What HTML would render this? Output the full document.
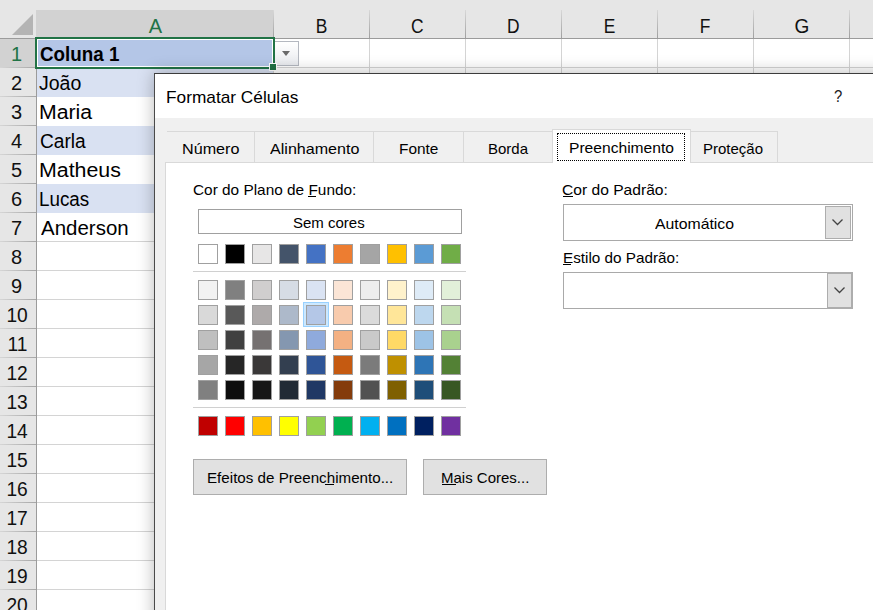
<!DOCTYPE html>
<html><head><meta charset="utf-8">
<style>
*{margin:0;padding:0;box-sizing:border-box}
html,body{width:873px;height:610px;overflow:hidden;background:#fff}
body{position:relative;font-family:"Liberation Sans",sans-serif;color:#000}
.abs{position:absolute}
.t{position:absolute;white-space:nowrap;line-height:30px;transform-origin:0 0}
.ul{position:absolute;height:1px;background:#000}
#topstrip{position:absolute;left:0;top:0;width:873px;height:10px;background:#e6e6e6}
#corner{position:absolute;left:0;top:10px;width:36px;height:28px;background:#e6e6e6}
#tri{position:absolute;left:12px;top:14px;width:0;height:0;border-left:21px solid transparent;border-bottom:21px solid #b4b4b4}
.ch{position:absolute;top:10px;height:28px;background:#e6e6e6;text-align:center;font-size:20px;line-height:32px;color:#111}
.ch.sel{background:#d2d2d2;color:#217346}
#chbg{position:absolute;left:36px;top:10px;width:837px;height:1px;background:#e6e6e6}
.chsep{position:absolute;top:10px;width:1px;height:28px;background:linear-gradient(#d8d8d8,#a0a0a0)}
#hbot{position:absolute;left:0;top:38px;width:873px;height:1px;background:#9b9b9b}
#hsel{position:absolute;left:36px;top:37px;width:238px;height:2px;background:#217346}
.rh{position:absolute;left:0;width:36px;height:28px;background:#e6e6e6;text-align:center;font-size:20px;line-height:30px;color:#111}
.rh.sel{background:#d2d2d2}
.rn{position:absolute;left:0;height:28px;text-align:center;font-size:20px;line-height:30px;color:#111}
.rn.sel{color:#217346}
.rsep{position:absolute;left:0;width:36px;height:1px;background:linear-gradient(to right,#d6d6d6,#a6a6a6)}
#rright{position:absolute;left:36px;top:38px;width:1px;height:572px;background:#9b9b9b}
.gh{position:absolute;width:873px;height:1px;background:#d4d4d4}
.gv{position:absolute;top:39px;width:1px;height:571px;background:#d4d4d4}
.cellbg{position:absolute;left:37px;width:237px;height:29px}
#selfill{position:absolute;left:37px;top:39px;width:236px;height:28px;background:#B4C6E7}
#selbox{position:absolute;left:35px;top:37px;width:240px;height:32px;border:2px solid #217346}
#selin{position:absolute;left:37px;top:39px;width:236px;height:28px;border:1px solid #fff}
#handle{position:absolute;left:269px;top:63px;width:8px;height:8px;background:#217346;border:1px solid #fff}
#ddbtn{position:absolute;left:274px;top:41px;width:25px;height:25px;border:1px solid #b4b8c0;background:linear-gradient(#ffffff,#e9ebef)}
#ddbtn:after{content:"";position:absolute;left:7px;top:9px;border-left:4.6px solid transparent;border-right:4.6px solid transparent;border-top:5px solid #6a6a6a}
#dlg{position:absolute;left:154px;top:73px;width:760px;height:600px;background:#f0f0f0;border:1px solid #4a4a4a;border-top-color:#3c3c3c;box-shadow:0 0 16px rgba(0,0,0,0.28)}
#title{position:absolute;left:155px;top:74px;width:718px;height:44px;background:#fff}
.tab{position:absolute;top:131px;height:31px;border-top:1px solid #d9d9d9;border-right:1px solid #d9d9d9;background:#f0f0f0}
.tab.sel{top:129px;height:34px;background:#fff;border-left:1px solid #d9d9d9}
#panel{position:absolute;left:165px;top:162px;width:720px;height:460px;background:#fff;border:1px solid #d9d9d9}
#focus{position:absolute;left:557px;top:133px;width:128px;height:28px;border:1px dotted #000}
.sw{position:absolute;width:20px;height:20px;border:1px solid #a0a0a0}
.hl{position:absolute;border:1px solid #99d1ff;background:#cce8ff;width:26px;height:25px}
.sep{position:absolute;left:193px;width:273px;height:1px;background:#d0d0d0}
#semcores{position:absolute;left:198px;top:209px;width:264px;height:25px;border:1px solid #a0a0a0}
.combo{position:absolute;left:563px;width:290px;height:37px;border:1px solid #a9a9a9;background:#fff}
.cbtn{position:absolute;background:#e1e1e1;border:1px solid #adadad}
.btn{position:absolute;top:459px;height:36px;background:#e1e1e1;border:1px solid #adadad}
</style></head><body>
<div id="topstrip"></div>
<div id="corner"></div><div id="tri"></div>
<div class="ch sel" style="left:36px;width:237px"><span style="display:inline-block;transform:scaleX(1);margin-left:2px">A</span></div><div class="ch" style="left:274px;width:95px"><span style="display:inline-block;transform:scaleX(0.87);">B</span></div><div class="ch" style="left:370px;width:95px"><span style="display:inline-block;transform:scaleX(0.87);">C</span></div><div class="ch" style="left:466px;width:95px"><span style="display:inline-block;transform:scaleX(0.87);">D</span></div><div class="ch" style="left:562px;width:95px"><span style="display:inline-block;transform:scaleX(0.87);">E</span></div><div class="ch" style="left:658px;width:95px"><span style="display:inline-block;transform:scaleX(0.87);">F</span></div><div class="ch" style="left:754px;width:95px"><span style="display:inline-block;transform:scaleX(0.95);">G</span></div><div class="ch" style="left:850px;width:95px"><span style="display:inline-block;transform:scaleX(0.87);"></span></div><div class="chsep" style="left:273px"></div><div class="chsep" style="left:369px"></div><div class="chsep" style="left:465px"></div><div class="chsep" style="left:561px"></div><div class="chsep" style="left:657px"></div><div class="chsep" style="left:753px"></div><div class="chsep" style="left:849px"></div>
<div class="cellbg" style="top:68px;background:#D9E1F2"></div><div class="cellbg" style="top:97px;background:#FFFFFF"></div><div class="cellbg" style="top:126px;background:#D9E1F2"></div><div class="cellbg" style="top:155px;background:#FFFFFF"></div><div class="cellbg" style="top:184px;background:#D9E1F2"></div><div class="cellbg" style="top:213px;background:#FFFFFF"></div>
<div class="gh" style="top:67px;left:36px"></div><div class="gh" style="top:96px;left:274px"></div><div class="gh" style="top:125px;left:274px"></div><div class="gh" style="top:154px;left:274px"></div><div class="gh" style="top:183px;left:274px"></div><div class="gh" style="top:212px;left:274px"></div><div class="gh" style="top:241px;left:36px"></div><div class="gh" style="top:270px;left:36px"></div><div class="gh" style="top:299px;left:36px"></div><div class="gh" style="top:328px;left:36px"></div><div class="gh" style="top:357px;left:36px"></div><div class="gh" style="top:386px;left:36px"></div><div class="gh" style="top:415px;left:36px"></div><div class="gh" style="top:444px;left:36px"></div><div class="gh" style="top:473px;left:36px"></div><div class="gh" style="top:502px;left:36px"></div><div class="gh" style="top:531px;left:36px"></div><div class="gh" style="top:560px;left:36px"></div><div class="gh" style="top:589px;left:36px"></div><div class="gh" style="top:618px;left:36px"></div><div class="gv" style="left:273px"></div><div class="gv" style="left:369px"></div><div class="gv" style="left:465px"></div><div class="gv" style="left:561px"></div><div class="gv" style="left:657px"></div><div class="gv" style="left:753px"></div><div class="gv" style="left:849px"></div>
<div id="selfill"></div>
<div class="t" style="left:39.02px;top:68px;font-size:20px;transform:scaleX(0.9762);color:#000;">João</div><div class="t" style="left:38.88px;top:97px;font-size:20px;transform:scaleX(1.0625);color:#000;">Maria</div><div class="t" style="left:40.04px;top:126px;font-size:20px;transform:scaleX(0.9574);color:#000;">Carla</div><div class="t" style="left:38.86px;top:155px;font-size:20px;transform:scaleX(1.0676);color:#000;">Matheus</div><div class="t" style="left:39.12px;top:184px;font-size:20px;transform:scaleX(0.9412);color:#000;">Lucas</div><div class="t" style="left:41.0px;top:213px;font-size:20px;transform:scaleX(1.0238);color:#000;">Anderson</div>
<div class="t" style="left:40.06px;top:39px;font-size:20px;font-weight:bold;transform:scaleX(0.9398);color:#000;">Coluna 1</div>
<div class="rh sel" style="top:39px;height:28px"></div><div class="rn sel" style="top:39px;width:33px"><span style="display:inline-block;transform:scaleX(1)">1</span></div><div class="rsep" style="top:67px"></div><div class="rh" style="top:68px;height:28px"></div><div class="rn" style="top:68px;width:33px"><span style="display:inline-block;transform:scaleX(1)">2</span></div><div class="rsep" style="top:96px"></div><div class="rh" style="top:97px;height:28px"></div><div class="rn" style="top:97px;width:33px"><span style="display:inline-block;transform:scaleX(1)">3</span></div><div class="rsep" style="top:125px"></div><div class="rh" style="top:126px;height:28px"></div><div class="rn" style="top:126px;width:33px"><span style="display:inline-block;transform:scaleX(1)">4</span></div><div class="rsep" style="top:154px"></div><div class="rh" style="top:155px;height:28px"></div><div class="rn" style="top:155px;width:33px"><span style="display:inline-block;transform:scaleX(1)">5</span></div><div class="rsep" style="top:183px"></div><div class="rh" style="top:184px;height:28px"></div><div class="rn" style="top:184px;width:33px"><span style="display:inline-block;transform:scaleX(1)">6</span></div><div class="rsep" style="top:212px"></div><div class="rh" style="top:213px;height:28px"></div><div class="rn" style="top:213px;width:33px"><span style="display:inline-block;transform:scaleX(1)">7</span></div><div class="rsep" style="top:241px"></div><div class="rh" style="top:242px;height:28px"></div><div class="rn" style="top:242px;width:33px"><span style="display:inline-block;transform:scaleX(1)">8</span></div><div class="rsep" style="top:270px"></div><div class="rh" style="top:271px;height:28px"></div><div class="rn" style="top:271px;width:33px"><span style="display:inline-block;transform:scaleX(1)">9</span></div><div class="rsep" style="top:299px"></div><div class="rh" style="top:300px;height:28px"></div><div class="rn" style="top:300px;width:35px"><span style="display:inline-block;transform:scaleX(0.96)">10</span></div><div class="rsep" style="top:328px"></div><div class="rh" style="top:329px;height:28px"></div><div class="rn" style="top:329px;width:35px"><span style="display:inline-block;transform:scaleX(0.96)">11</span></div><div class="rsep" style="top:357px"></div><div class="rh" style="top:358px;height:28px"></div><div class="rn" style="top:358px;width:35px"><span style="display:inline-block;transform:scaleX(0.96)">12</span></div><div class="rsep" style="top:386px"></div><div class="rh" style="top:387px;height:28px"></div><div class="rn" style="top:387px;width:35px"><span style="display:inline-block;transform:scaleX(0.96)">13</span></div><div class="rsep" style="top:415px"></div><div class="rh" style="top:416px;height:28px"></div><div class="rn" style="top:416px;width:35px"><span style="display:inline-block;transform:scaleX(0.96)">14</span></div><div class="rsep" style="top:444px"></div><div class="rh" style="top:445px;height:28px"></div><div class="rn" style="top:445px;width:35px"><span style="display:inline-block;transform:scaleX(0.96)">15</span></div><div class="rsep" style="top:473px"></div><div class="rh" style="top:474px;height:28px"></div><div class="rn" style="top:474px;width:35px"><span style="display:inline-block;transform:scaleX(0.96)">16</span></div><div class="rsep" style="top:502px"></div><div class="rh" style="top:503px;height:28px"></div><div class="rn" style="top:503px;width:35px"><span style="display:inline-block;transform:scaleX(0.96)">17</span></div><div class="rsep" style="top:531px"></div><div class="rh" style="top:532px;height:28px"></div><div class="rn" style="top:532px;width:35px"><span style="display:inline-block;transform:scaleX(0.96)">18</span></div><div class="rsep" style="top:560px"></div><div class="rh" style="top:561px;height:28px"></div><div class="rn" style="top:561px;width:35px"><span style="display:inline-block;transform:scaleX(0.96)">19</span></div><div class="rsep" style="top:589px"></div><div class="rh" style="top:590px;height:28px"></div><div class="rn" style="top:590px;width:35px"><span style="display:inline-block;transform:scaleX(0.96)">20</span></div><div class="rsep" style="top:618px"></div>
<div id="hbot"></div>
<div id="rright"></div>
<div id="hsel"></div>
<div id="ddbtn"></div>
<div id="selbox"></div>
<div id="selin"></div>
<div id="handle"></div>

<div id="dlg"></div>
<div id="title"></div>
<div class="t" style="left:165.98px;top:83px;font-size:17px;transform:scaleX(1.0155);color:#000;">Formatar Células</div>
<div class="t" style="left:834.12px;top:82px;font-size:17px;transform:scaleX(0.875);color:#222;">?</div>

<div class="tab" style="left:167px;width:88px"></div>
<div class="tab" style="left:255px;width:119px"></div>
<div class="tab" style="left:374px;width:90px"></div>
<div class="tab" style="left:464px;width:89px"></div>
<div class="tab" style="left:690px;width:88px"></div>
<div id="panel"></div>
<div class="tab sel" style="left:552px;width:139px"></div>
<div id="focus"></div>
<div class="t" style="left:181.92px;top:134px;font-size:15px;transform:scaleX(1.0769);color:#000;">Número</div><div class="t" style="left:270.0px;top:134px;font-size:15px;transform:scaleX(1.0723);color:#000;">Alinhamento</div><div class="t" style="left:398.97px;top:134px;font-size:15px;transform:scaleX(1.027);color:#000;">Fonte</div><div class="t" style="left:488.0px;top:134px;font-size:15px;color:#000;">Borda</div><div class="t" style="left:568.96px;top:133px;font-size:15px;transform:scaleX(1.0404);color:#000;">Preenchimento</div><div class="t" style="left:703.0px;top:134px;font-size:15px;color:#000;">Proteção</div>

<div class="t" style="left:192.97px;top:175px;font-size:15px;transform:scaleX(1.0255);color:#000;">Cor do Plano de Fundo:</div><div class="ul" style="left:308px;top:196px;width:8px"></div>
<div id="semcores"></div>
<div class="t" style="left:293.0px;top:208px;font-size:15px;color:#000;">Sem cores</div>
<div class="sep" style="top:271px"></div>
<div class="sep" style="top:407px"></div>
<div class="hl" style="left:303px;top:302px"></div>
<div class="sw" style="left:198px;top:244px;background:#FFFFFF"></div>
<div class="sw" style="left:225px;top:244px;background:#000000"></div>
<div class="sw" style="left:252px;top:244px;background:#E7E6E6"></div>
<div class="sw" style="left:279px;top:244px;background:#44546A"></div>
<div class="sw" style="left:306px;top:244px;background:#4472C4"></div>
<div class="sw" style="left:333px;top:244px;background:#ED7D31"></div>
<div class="sw" style="left:360px;top:244px;background:#A5A5A5"></div>
<div class="sw" style="left:387px;top:244px;background:#FFC000"></div>
<div class="sw" style="left:414px;top:244px;background:#5B9BD5"></div>
<div class="sw" style="left:441px;top:244px;background:#70AD47"></div>
<div class="sw" style="left:198px;top:280px;background:#F2F2F2"></div>
<div class="sw" style="left:225px;top:280px;background:#808080"></div>
<div class="sw" style="left:252px;top:280px;background:#D0CECE"></div>
<div class="sw" style="left:279px;top:280px;background:#D6DCE5"></div>
<div class="sw" style="left:306px;top:280px;background:#DAE3F3"></div>
<div class="sw" style="left:333px;top:280px;background:#FBE5D6"></div>
<div class="sw" style="left:360px;top:280px;background:#EDEDED"></div>
<div class="sw" style="left:387px;top:280px;background:#FFF2CC"></div>
<div class="sw" style="left:414px;top:280px;background:#DEEBF7"></div>
<div class="sw" style="left:441px;top:280px;background:#E2F0D9"></div>
<div class="sw" style="left:198px;top:305px;background:#D9D9D9"></div>
<div class="sw" style="left:225px;top:305px;background:#595959"></div>
<div class="sw" style="left:252px;top:305px;background:#AEAAAA"></div>
<div class="sw" style="left:279px;top:305px;background:#ADB9CA"></div>
<div class="sw" style="left:306px;top:305px;background:#B4C7E7"></div>
<div class="sw" style="left:333px;top:305px;background:#F8CBAD"></div>
<div class="sw" style="left:360px;top:305px;background:#DBDBDB"></div>
<div class="sw" style="left:387px;top:305px;background:#FFE699"></div>
<div class="sw" style="left:414px;top:305px;background:#BDD7EE"></div>
<div class="sw" style="left:441px;top:305px;background:#C5E0B4"></div>
<div class="sw" style="left:198px;top:330px;background:#BFBFBF"></div>
<div class="sw" style="left:225px;top:330px;background:#404040"></div>
<div class="sw" style="left:252px;top:330px;background:#757171"></div>
<div class="sw" style="left:279px;top:330px;background:#8497B0"></div>
<div class="sw" style="left:306px;top:330px;background:#8FAADC"></div>
<div class="sw" style="left:333px;top:330px;background:#F4B183"></div>
<div class="sw" style="left:360px;top:330px;background:#C9C9C9"></div>
<div class="sw" style="left:387px;top:330px;background:#FFD966"></div>
<div class="sw" style="left:414px;top:330px;background:#9DC3E6"></div>
<div class="sw" style="left:441px;top:330px;background:#A9D18E"></div>
<div class="sw" style="left:198px;top:355px;background:#A6A6A6"></div>
<div class="sw" style="left:225px;top:355px;background:#262626"></div>
<div class="sw" style="left:252px;top:355px;background:#3A3838"></div>
<div class="sw" style="left:279px;top:355px;background:#333F50"></div>
<div class="sw" style="left:306px;top:355px;background:#2F5597"></div>
<div class="sw" style="left:333px;top:355px;background:#C55A11"></div>
<div class="sw" style="left:360px;top:355px;background:#7B7B7B"></div>
<div class="sw" style="left:387px;top:355px;background:#BF9000"></div>
<div class="sw" style="left:414px;top:355px;background:#2E75B6"></div>
<div class="sw" style="left:441px;top:355px;background:#538135"></div>
<div class="sw" style="left:198px;top:380px;background:#808080"></div>
<div class="sw" style="left:225px;top:380px;background:#0D0D0D"></div>
<div class="sw" style="left:252px;top:380px;background:#161616"></div>
<div class="sw" style="left:279px;top:380px;background:#222B35"></div>
<div class="sw" style="left:306px;top:380px;background:#203864"></div>
<div class="sw" style="left:333px;top:380px;background:#843C0C"></div>
<div class="sw" style="left:360px;top:380px;background:#525252"></div>
<div class="sw" style="left:387px;top:380px;background:#7F6000"></div>
<div class="sw" style="left:414px;top:380px;background:#1F4E79"></div>
<div class="sw" style="left:441px;top:380px;background:#385723"></div>
<div class="sw" style="left:198px;top:416px;background:#C00000"></div>
<div class="sw" style="left:225px;top:416px;background:#FF0000"></div>
<div class="sw" style="left:252px;top:416px;background:#FFC000"></div>
<div class="sw" style="left:279px;top:416px;background:#FFFF00"></div>
<div class="sw" style="left:306px;top:416px;background:#92D050"></div>
<div class="sw" style="left:333px;top:416px;background:#00B050"></div>
<div class="sw" style="left:360px;top:416px;background:#00B0F0"></div>
<div class="sw" style="left:387px;top:416px;background:#0070C0"></div>
<div class="sw" style="left:414px;top:416px;background:#002060"></div>
<div class="sw" style="left:441px;top:416px;background:#7030A0"></div>

<div class="t" style="left:561.96px;top:175px;font-size:15px;transform:scaleX(1.0404);color:#000;">Cor do Padrão:</div><div class="ul" style="left:563px;top:196px;width:10px"></div>
<div class="combo" style="top:204px"></div>
<div class="t" style="left:655.0px;top:209px;font-size:15px;transform:scaleX(1.0533);color:#000;">Automático</div>
<div class="cbtn" style="left:825px;top:206px;width:26px;height:33px"></div>
<svg class="abs" style="left:831px;top:217.5px" width="13" height="9"><path d="M1.5 1.5 L6.5 6.5 L11.5 1.5" stroke="#444" stroke-width="1.3" fill="none"/></svg>
<div class="t" style="left:562.98px;top:243px;font-size:15px;transform:scaleX(1.0179);color:#000;">Estilo do Padrão:</div><div class="ul" style="left:563px;top:264px;width:8px"></div>
<div class="combo" style="top:272px"></div>
<div class="cbtn" style="left:827px;top:272px;width:26px;height:37px;border-width:2px 2px 2px 1px"></div>
<svg class="abs" style="left:833px;top:285.7px" width="13" height="9"><path d="M1.5 1.5 L6.5 6.5 L11.5 1.5" stroke="#444" stroke-width="1.3" fill="none"/></svg>

<div class="btn" style="left:193px;width:214px"></div>
<div class="t" style="left:206.99px;top:463px;font-size:15px;transform:scaleX(1.011);color:#000;">Efeitos de Preenchimento...</div><div class="ul" style="left:325px;top:484px;width:9px"></div>
<div class="btn" style="left:423px;width:124px"></div>
<div class="t" style="left:441.0px;top:463px;font-size:15px;color:#000;">Mais Cores...</div><div class="ul" style="left:442px;top:484px;width:14px"></div>
</body></html>
